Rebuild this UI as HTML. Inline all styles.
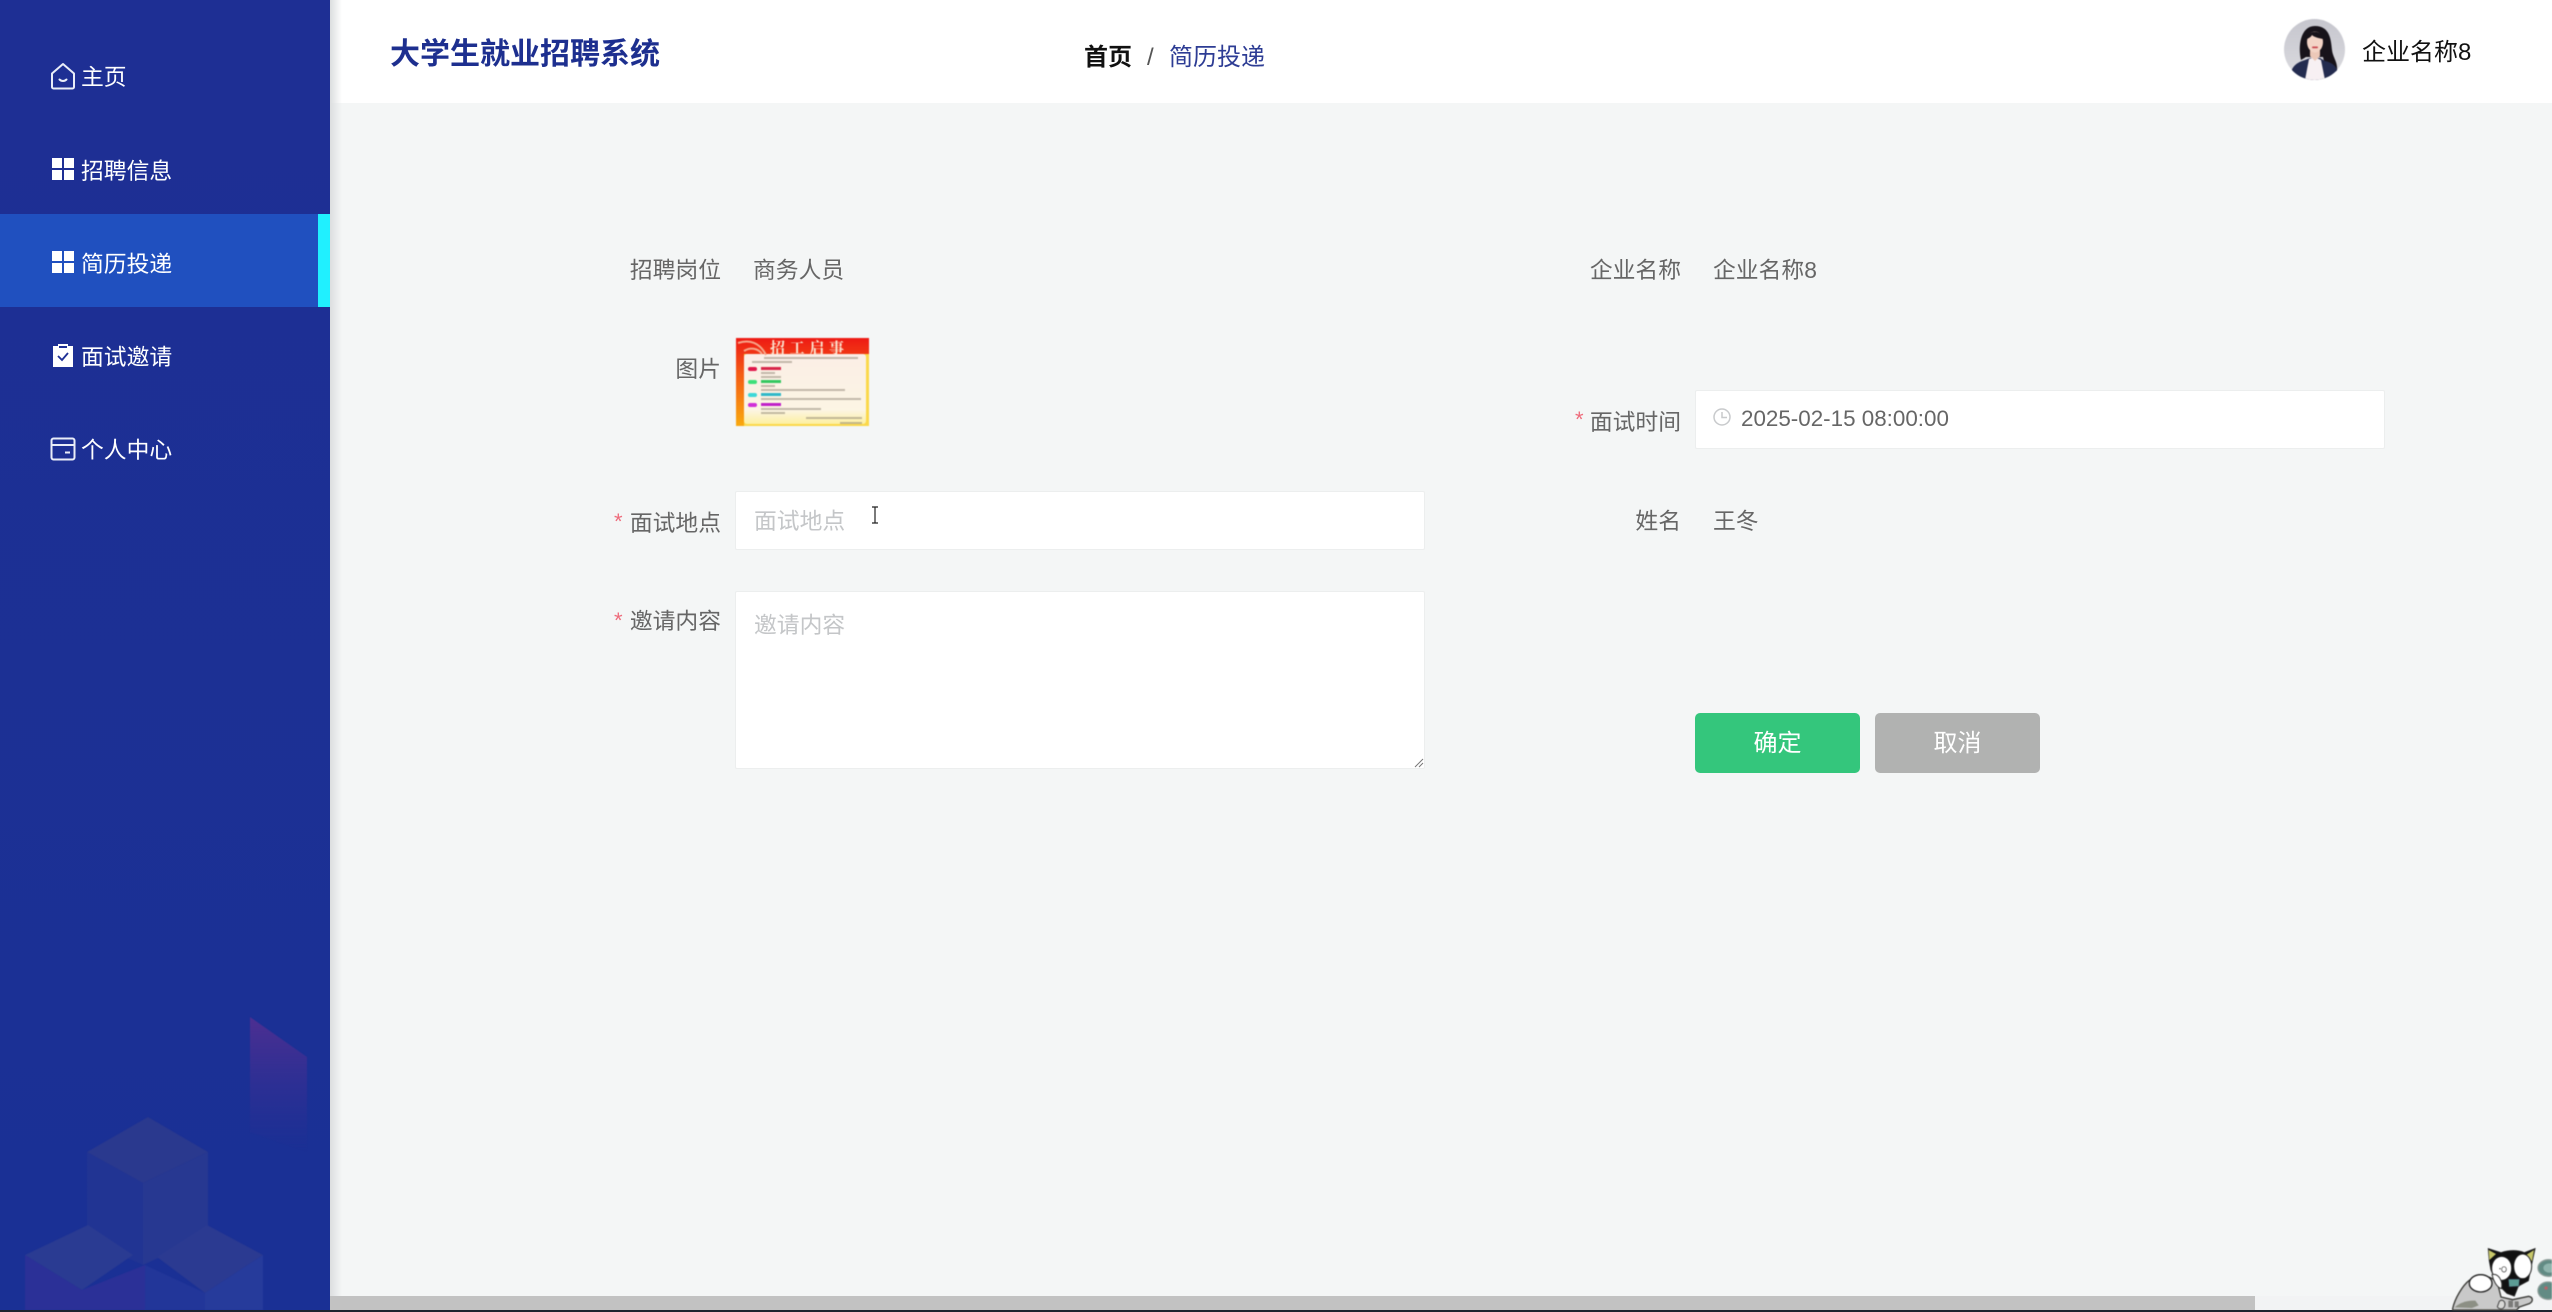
<!DOCTYPE html>
<html lang="zh-CN"><head><meta charset="utf-8"><title>大学生就业招聘系统</title>
<style>
html,body{margin:0;padding:0;width:2552px;height:1312px;overflow:hidden;background:#f4f6f6}
body{position:relative;font-family:"Liberation Sans","Noto Sans CJK SC",sans-serif;font-size:22.8px;color:#666}
.a,.t{position:absolute}
.t{white-space:nowrap;line-height:32px;height:32px}
.r{text-align:right}
.m{color:#fff;left:81px}
.star{color:#ee6b7b;font-size:22px;line-height:32px}
.box{position:absolute;background:#fff;border:1px solid #eceeee;box-sizing:border-box;border-radius:2px}
.ph{color:#c4c6c8}
svg{position:absolute;display:block}
.soft{filter:blur(.5px)}
</style></head><body>

<!-- main shadow & header -->
<div class="a" style="left:330px;top:0;width:2222px;height:103px;background:#fff"></div>
<div class="a" style="left:330px;top:0;width:12px;height:1310px;background:linear-gradient(90deg,#dcdedf,rgba(240,242,242,0))"></div>

<!-- sidebar -->
<div class="a" style="left:0;top:0;width:330px;height:1312px;background:linear-gradient(180deg,#1e2f94,#1a3095)"></div>
<svg class="soft" style="left:0;top:980px" width="330" height="332" viewBox="0 0 330 332">
<defs>
<linearGradient id="p" x1="0" y1="0" x2="0" y2="1"><stop offset="0" stop-color="#5f2f90" stop-opacity=".75"/><stop offset="1" stop-color="#3a2f95" stop-opacity="0"/></linearGradient>
</defs>
<polygon points="250,37 307,77 307,172 250,152" fill="url(#p)"/>
<polygon points="87,172 143,203 143,285 87,260" fill="#213493"/>
<polygon points="143,203 208,172 208,255 143,285" fill="#273891"/>
<polygon points="148,137 208,172 143,203 87,172" fill="#2a398e"/>
<polygon points="25,275 82,310 145,285 145,330 25,330" fill="#2b3097"/>
<polygon points="88,245 133,275 82,310 25,275" fill="#2a3b92"/>
<polygon points="207,245 263,275 205,313 157,277" fill="#2b3a91"/>
<polygon points="205,313 263,275 263,330 205,330" fill="#263b9b"/>
<polygon points="145,285 205,313 205,330 145,330" fill="#223699"/>
</svg>
<div class="a" style="left:0;top:214px;width:330px;height:93px;background:#2050bf"></div>
<div class="a" style="left:318px;top:214px;width:12px;height:93px;background:#20f0ff"></div>

<svg style="left:50px;top:62px" width="26" height="28" viewBox="0 0 26 28" fill="none" stroke="#e9edf8" stroke-width="2"><path d="M2 11.500 13 2l11 9.500V25a1.500 1.500 0 0 1-1.500 1.500h-19A1.500 1.500 0 0 1 2 25z" stroke-linejoin="round"/><path d="M9.500 17.500c2 2 5 2 7 0" stroke-linecap="round"/></svg>
<div class="t m" style="top:61px">主页</div>
<svg style="left:52px;top:158px" width="22" height="22" viewBox="0 0 22 22" fill="#fff"><rect width="10" height="10"/><rect x="12" width="10" height="10"/><rect y="12" width="10" height="10"/><rect x="12" y="12" width="10" height="10"/></svg>
<div class="t m" style="top:155px">招聘信息</div>
<svg style="left:52px;top:251px" width="22" height="22" viewBox="0 0 22 22" fill="#fff"><rect width="10" height="10"/><rect x="12" width="10" height="10"/><rect y="12" width="10" height="10"/><rect x="12" y="12" width="10" height="10"/></svg>
<div class="t m" style="top:248px">简历投递</div>
<svg style="left:52px;top:343px" width="22" height="24" viewBox="0 0 22 24"><path fill="#fff" d="M1 3h5V1h10v2h5v21H1z"/><rect x="7" y="3" width="8" height="2" fill="#1d2f95"/><path d="M6 13l4 4 6-7" fill="none" stroke="#1d2f95" stroke-width="1.800"/></svg>
<div class="t m" style="top:341px">面试邀请</div>
<svg style="left:50px;top:437px" width="26" height="24" viewBox="0 0 26 24" fill="none" stroke="#e9edf8" stroke-width="2"><rect x="1.500" y="1.500" width="23" height="21" rx="2"/><path d="M1.500 8h23"/><path d="M15 15.500h5"/></svg>
<div class="t m" style="top:434px">个人中心</div>

<!-- header content -->
<div class="t" style="left:390px;top:37px;font-size:30px;line-height:36px;height:36px;font-weight:700;color:#1d2f8f">大学生就业招聘系统</div>
<div class="t" style="left:1084px;top:42px;font-size:24px;font-weight:700;color:#111">首页</div>
<div class="t" style="left:1147px;top:42px;font-size:24px;color:#555">/</div>
<div class="t" style="left:1169px;top:42px;font-size:24px;color:#2d3c94">简历投递</div>

<svg class="soft" style="left:2284px;top:19px" width="61" height="61" viewBox="0 0 61 61">
<defs><clipPath id="c"><circle cx="30.500" cy="30.500" r="30.500"/></clipPath><linearGradient id="bg" x1="0" y1="0" x2="0" y2="1"><stop offset="0" stop-color="#c6c6ce"/><stop offset="1" stop-color="#dcdce0"/></linearGradient></defs>
<g clip-path="url(#c)">
<rect width="61" height="61" fill="url(#bg)"/>
<path d="M17 41C14 28 16 7 31 7s16 14 17 24c1 8 6 12 5 21l-10 3-4-17H22z" fill="#17131a"/>
<path d="M6 61c0-12 5-17 15-20l5-2 10 0 5 3c9 2 14 7 14 19z" fill="#232b4f"/>
<path d="M21 61l4-21 6-2 6 3 4 20z" fill="#f7f0f3"/>
<path d="M26 28h10v9l-5 5-5-5z" fill="#ecc8b8"/>
<ellipse cx="31" cy="23" rx="8" ry="10.500" fill="#f3d4c6"/>
<path d="M23 20c1-6 6-8 10-7 3 1 6 3 6 7-5-1-9-2-11-4-1 2-3 3-5 4z" fill="#17131a"/>
<rect x="28" y="27.500" width="6" height="1.800" rx=".9" fill="#c9464e"/>
</g></svg>
<div class="t" style="left:2362px;top:37px;font-size:24px;color:#111">企业名称8</div>

<!-- form left -->
<div class="t r" style="left:600px;width:121px;top:254px">招聘岗位</div>
<div class="t" style="left:753px;top:254px">商务人员</div>
<div class="t r" style="left:600px;width:121px;top:353px">图片</div>

<svg class="soft" style="left:736px;top:338px" width="133" height="88" viewBox="0 0 133 88">
<defs>
<linearGradient id="g1" x1="0" y1="0" x2="0" y2="1"><stop offset="0" stop-color="#ee1a14"/><stop offset=".4" stop-color="#f45a14"/><stop offset="1" stop-color="#f9a90f"/></linearGradient>
<linearGradient id="g2" x1="0" y1="0" x2="0" y2="1"><stop offset="0" stop-color="#fbeee6"/><stop offset=".8" stop-color="#fcf5e4"/><stop offset="1" stop-color="#fdf0a0"/></linearGradient>
</defs>
<rect width="133" height="88" fill="url(#g1)"/>
<rect x="8" y="16" width="125" height="72" fill="#fbd84a"/>
<rect x="8" y="16" width="122" height="70" rx="3" fill="url(#g2)"/>
<path d="M2 5c12-4 22 0 28 12M8 13c6-4 14-3 18 3" fill="none" stroke="#f7a68a" stroke-width="2"/>
<text x="34" y="15" font-size="15" font-weight="700" fill="#fbe6d2" style="font-family:'Noto Serif CJK SC',serif" textLength="74">招工启事</text>
<g fill="#8a8070" opacity=".5"><rect x="28" y="19" width="94" height="2"/><rect x="16" y="23" width="40" height="2"/><rect x="25" y="34" width="14" height="2"/><rect x="25" y="38" width="20" height="2"/><rect x="25" y="47" width="14" height="2"/><rect x="25" y="51" width="84" height="2"/><rect x="25" y="60" width="100" height="2"/><rect x="25" y="70" width="60" height="2"/><rect x="25" y="74" width="24" height="2"/><rect x="70" y="79" width="56" height="2"/><rect x="104" y="84" width="22" height="2"/></g>
<rect x="12" y="29" width="9" height="4" rx="2" fill="#e0174a"/><rect x="25" y="29" width="20" height="3" fill="#d8264a"/>
<rect x="12" y="42" width="9" height="4" rx="2" fill="#3fe07a"/><rect x="25" y="42" width="20" height="3" fill="#34c860"/>
<rect x="12" y="55" width="9" height="4" rx="2" fill="#3fd8d8"/><rect x="25" y="55" width="20" height="3" fill="#30b8c8"/>
<rect x="12" y="65" width="9" height="4" rx="2" fill="#d030d8"/><rect x="25" y="65" width="20" height="3" fill="#c020c8"/>
</svg>

<div class="t star" style="left:614px;top:506px">*</div>
<div class="t r" style="left:600px;width:121px;top:507px">面试地点</div>
<div class="box" style="left:735px;top:491px;width:690px;height:59px"></div>
<div class="t ph" style="left:754px;top:505px">面试地点</div>
<svg style="left:870px;top:506px" width="10" height="18" viewBox="0 0 10 18" fill="none" stroke="#222" stroke-width="1.200"><path d="M2 1h6M5 1v16M2 17h6"/></svg>

<div class="t star" style="left:614px;top:605px">*</div>
<div class="t r" style="left:600px;width:121px;top:605px">邀请内容</div>
<div class="box" style="left:735px;top:591px;width:690px;height:178px"></div>
<div class="t ph" style="left:754px;top:609px">邀请内容</div>
<svg style="left:1414px;top:758px" width="10" height="10" viewBox="0 0 10 10" stroke="#777" stroke-width="1"><path d="M1 9 9 1M5 9 9 5"/></svg>

<!-- form right -->
<div class="t r" style="left:1560px;width:121px;top:254px">企业名称</div>
<div class="t" style="left:1713px;top:254px">企业名称8</div>

<div class="t star" style="left:1575px;top:404px">*</div>
<div class="t r" style="left:1560px;width:121px;top:406px">面试时间</div>
<div class="box" style="left:1695px;top:390px;width:690px;height:59px"></div>
<svg style="left:1712px;top:407px" width="20" height="20" viewBox="0 0 20 20" fill="none" stroke="#c8cacc" stroke-width="1.500"><circle cx="10" cy="10" r="8"/><path d="M10 5v5.500h5"/></svg>
<div class="t" style="left:1741px;top:403px;font-size:22.4px">2025-02-15 08:00:00</div>

<div class="t r" style="left:1560px;width:121px;top:505px">姓名</div>
<div class="t" style="left:1713px;top:505px">王冬</div>

<div class="a" style="left:1695px;top:713px;width:165px;height:60px;background:#34c67c;border-radius:5px;color:#fff;text-align:center;line-height:62px;font-size:24px">确定</div>
<div class="a" style="left:1875px;top:713px;width:165px;height:60px;background:#b1b2b1;border-radius:5px;color:#fff;text-align:center;line-height:62px;font-size:24px">取消</div>

<!-- scrollbar -->
<div class="a" style="left:330px;top:1296px;width:2222px;height:14px;background:#f2f3f4"></div>
<div class="a" style="left:330px;top:1296px;width:1925px;height:14px;background:#c2c2c2"></div>
<div class="a" style="left:0;top:1310px;width:2552px;height:2px;background:#1c2430"></div>

<!-- cat widget -->
<svg class="soft" style="left:2450px;top:1244px" width="102" height="68" viewBox="0 0 306 204">
<path d="M8 194c6-30 30-70 50-85 25-18 65-18 85 10l10 40 35 8 48-10c12 2 16 14 2 22l-30 10-8 9H8z" fill="#c9c9c9" stroke="#3a3a36" stroke-width="4" stroke-linejoin="round"/>
<path d="M14 190c14-14 40-22 62-20l10 14-20 8z" fill="#8c8f84"/>
<path d="M118 50l-3-36 38 12c25-8 50-8 70 0l32-12-10 46-10 50-30 16-12 30-22-8-30-30-18-40z" fill="#111" stroke="#222" stroke-width="3"/>
<path d="M118 48l-2-30 22 12z" fill="#c8c86a"/><path d="M246 52l6-34-22 14z" fill="#c8c86a"/>
<ellipse cx="155" cy="73" rx="30" ry="36" fill="#fff" stroke="#222" stroke-width="3"/>
<ellipse cx="218" cy="67" rx="27" ry="37" fill="#fff" stroke="#222" stroke-width="3"/>
<path d="M175 105h34l-2 22-30 2z" fill="#5c9c94" stroke="#223" stroke-width="2"/>
<ellipse cx="162" cy="76" rx="7" ry="8" fill="none" stroke="#333" stroke-width="2"/><circle cx="150" cy="74" r="2" fill="#333"/>
<ellipse cx="92" cy="118" rx="34" ry="26" fill="#fff" stroke="#222" stroke-width="4"/>
<path d="M126 92c20-6 34 22 28 42-14-4-24-24-28-42z" fill="#fff" stroke="#333" stroke-width="3"/>
<rect x="175" y="170" width="14" height="20" fill="#7a7a78"/><rect x="194" y="172" width="12" height="18" fill="#7a7a78"/>
<path d="M148 172c8-8 20 0 16 14-4 12-18 10-22 2z" fill="#d8d8d6" stroke="#444" stroke-width="3"/>
<ellipse cx="296" cy="72" rx="32" ry="25" fill="#628b84" stroke="#8c9c98" stroke-width="4"/><ellipse cx="298" cy="72" rx="18" ry="14" fill="#8fb4ad"/>
<ellipse cx="294" cy="140" rx="30" ry="26" fill="#628b84" stroke="#8c9c98" stroke-width="4"/><circle cx="288" cy="132" r="5" fill="#b9646a"/>
</svg>
</body></html>
